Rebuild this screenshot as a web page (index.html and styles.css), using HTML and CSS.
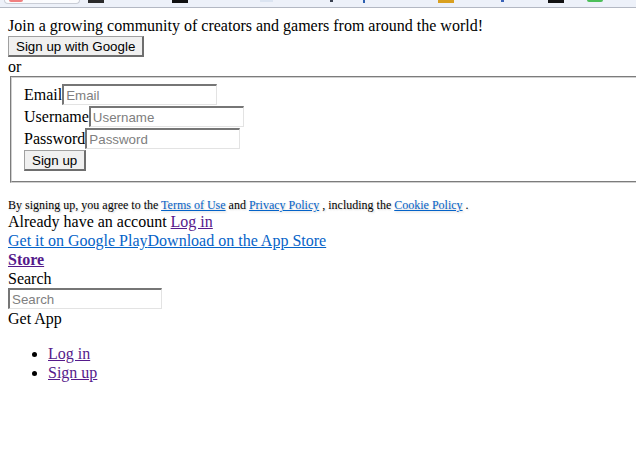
FILE: index.html
```html
<!DOCTYPE html>
<html>
<head>
<title>Sign up</title>
<meta name=viewport content="width=device-width, initial-scale=1">
<link rel="stylesheet" href="styles.css">
</head>
<body>
<div class="topbar">
<span class="tab"><span class="tabdot"></span></span>
<span class="ico i1"></span>
<span class="ico i2"></span>
<span class="ico i3"></span>
<span class="ico i4"></span>
<span class="ico i5"></span>
<span class="ico i6"></span>
<span class="ico i7"></span>
<span class="ico i8"></span>
<span class="ico i9"></span>
</div>
<div class="page">
<div>Join a growing community of creators and gamers from around the world!</div>
<div class="row"><button class="btn">Sign up with Google</button></div>
<div>or</div>
<fieldset class="signup">
<div class="row"><label>Email</label><input class="field" placeholder="Email"></div>
<div class="row"><label>Username</label><input class="field" placeholder="Username"></div>
<div class="row"><label>Password</label><input class="field" type="password" placeholder="Password"></div>
<div class="row"><button class="btn">Sign up</button></div>
</fieldset>
<div class="terms">By signing up, you agree to the <a href="#" class="blue">Terms of Use</a> and <a href="#" class="blue">Privacy Policy</a> , including the <a href="#" class="blue">Cookie Policy</a> .</div>
<div>Already have an account <a href="#" class="seen">Log in</a></div>
<div><a href="#" class="blue">Get it on Google Play</a><a href="#" class="blue">Download on the App Store</a></div>
<div><a href="#" class="seen store">Store</a></div>
<div>Search</div>
<div class="row short"><input class="field search" placeholder="Search"></div>
<div>Get App</div>
<ul class="menu">
<li><a href="#" class="seen">Log in</a></li>
<li><a href="#" class="seen">Sign up</a></li>
</ul>
</div>
</body>
</html>
```
FILE: styles.css
```css
html {
    overflow: hidden;
}
body {
    margin: 0;
    background-color: white;
    font-family: "Liberation Serif", serif;
    font-size: 16px;
    line-height: 19px;
    color: black;
}
.topbar {
    display: flex;
    align-items: flex-start;
    height: 7px;
    background-color: #edf1f9;
    border-bottom: 1px solid #b3b8c3;
    overflow: hidden;
}
.tab {
    display: block;
    margin-left: 4px;
    width: 74px;
    height: 3px;
    background-color: #fbfcfe;
    border: 1px solid #c9cdd6;
    border-top: none;
    border-radius: 0 0 5px 5px;
}
.tabdot {
    display: block;
    margin-left: 4px;
    width: 14px;
    height: 2px;
    background-color: #f08080;
    border-radius: 0 0 4px 4px;
}
.ico {
    display: block;
    height: 3px;
}
.i1 { margin-left: 8px; width: 16px; background-color: #2b2b2b; }
.i2 { margin-left: 68px; width: 16px; background-color: #101010; }
.i3 { margin-left: 72px; width: 13px; height: 2px; background-color: #dbe4f1; }
.i4 { margin-left: 57px; width: 3px; height: 2px; background-color: #3a4150; }
.i5 { margin-left: 30px; width: 2px; background-color: #2c5fb0; }
.i6 { margin-left: 73px; width: 16px; background-color: #d9a020; }
.i7 { margin-left: 47px; width: 3px; height: 2px; background-color: #3a63b8; }
.i8 { margin-left: 44px; width: 16px; background-color: #111111; }
.i9 { margin-left: 23px; width: 16px; height: 2px; background-color: #4cbf5a; border-radius: 0 0 6px 6px; }
.page {
    padding: 8px;
}
.row {
    display: flex;
    align-items: flex-end;
    height: 22px;
}
.row.short {
    height: 21px;
}
.row label {
    line-height: 19px;
    margin-bottom: 1px;
}
.btn {
    font-family: "Liberation Sans", Arial, sans-serif;
    font-size: 13.33px;
    line-height: 15px;
    color: black;
    background-color: #f0f0f0;
    height: 21px;
    padding: 1px 7px 0 7px;
    border-style: solid;
    border-width: 1px 2px 2px 1px;
    border-color: #a0a0a0 #6e6e6e #6e6e6e #a0a0a0;
    border-radius: 0;
    margin: 0;
}
.field {
    box-sizing: border-box;
    width: 155px;
    height: 21px;
    margin: 0;
    padding: 1px 2px;
    font-family: "Liberation Sans", Arial, sans-serif;
    font-size: 13.33px;
    border-style: solid;
    border-width: 2px 1px 1px 2px;
    border-color: #767676 #e3e3e3 #e3e3e3 #767676;
    border-radius: 0;
}
.field::placeholder {
    color: #808080;
}
.search {
    width: 154px;
}
.signup {
    width: 680px;
    margin: 0 2px;
    padding: 5px 12px 10px 12px;
    border: 2px groove #d0d0d0;
}
.terms {
    margin-top: 16px;
    font-size: 12px;
    line-height: 13px;
    text-shadow: 1px 1px 2px #d2d2d2;
}
.blue {
    color: #0563c8;
}
.seen {
    color: #551a8b;
}
.store {
    font-weight: bold;
}
.menu {
    margin: 16px 0;
    padding-left: 40px;
}
```
